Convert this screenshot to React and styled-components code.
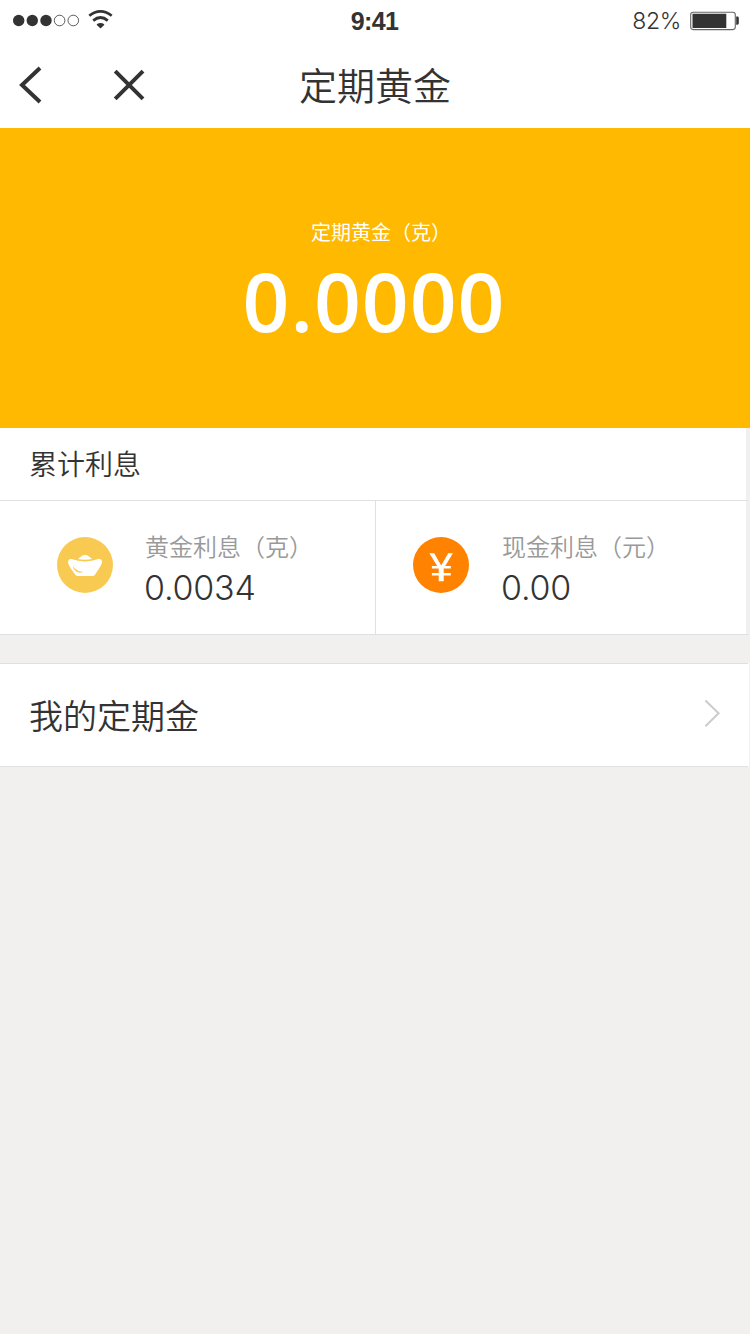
import React from "react";
import styled, { createGlobalStyle } from "styled-components";

const GlobalStyle = createGlobalStyle`
  * { box-sizing: border-box; }
  body { margin: 0; background: #f1f0ee; }
  svg { display: block; }
`;

const Page = styled.div`
  width: 750px;
  min-height: 1334px;
  background: #f1f0ee;
  color: #333;
  font-family: "Noto Sans CJK SC", sans-serif;
  font-weight: 350;
  white-space: nowrap;
`;

const StatusBar = styled.div`
  display: grid;
  grid-template-columns: 1fr auto 1fr;
  height: 40px;
  padding: 0 11px 0 12px;
  background: #fff;
`;

const Signal = styled.div`
  display: flex;
  height: 40px;
`;

const Clock = styled.div`
  padding-right: 2px;
  font-family: "Liberation Sans", Arial, sans-serif;
  font-size: 25px;
  font-weight: 700;
  line-height: 42px;
  letter-spacing: -0.6px;
`;

const Power = styled.div`
  display: flex;
  justify-content: flex-end;
  gap: 9px;
  font-family: Inter, sans-serif;
  font-size: 23px;
  font-weight: 300;
  line-height: 42px;
  letter-spacing: -0.3px;
`;

const NavBar = styled.header`
  display: grid;
  grid-template-columns: 250px 1fr 250px;
  height: 88px;
  background: #fff;
`;

const NavTitle = styled.h1`
  margin: 0;
  text-align: center;
  font-size: 38px;
  font-weight: 350;
  line-height: 88px;
`;

const Hero = styled.section`
  display: flex;
  flex-direction: column;
  align-items: center;
  height: 300px;
  padding-top: 88px;
  background: #ffb900;
  color: #fff;
`;

const HeroLabel = styled.div`
  height: 32px;
  padding-left: 12px;
  font-size: 20px;
  font-weight: 400;
  line-height: 31px;
`;

const HeroValue = styled.div`
  padding-right: 2px;
  font-family: "Open Sans", sans-serif;
  font-size: 82px;
  font-weight: 570;
  letter-spacing: 1px;
  line-height: 104px;
`;

const Panel = styled.section`
  width: ${(p) => p.$width}px;
  background: #fff;
`;

const Rule = styled.div`
  width: ${(p) => p.$width}px;
  height: 1px;
  background: #dfe0e1;
`;

const PanelTitle = styled.h2`
  height: 72px;
  margin: 0;
  padding-left: 29px;
  font-size: 28px;
  font-weight: 350;
  line-height: 70px;
`;

const Stats = styled.div`
  display: grid;
  grid-template-columns: 376px 1fr;
  height: 133px;
`;

const Stat = styled.div`
  display: grid;
  grid-template-columns: 56px 1fr;
  column-gap: ${(p) => p.$gap}px;
  padding: 36px 0 0 ${(p) => p.$inset}px;
  border-right: ${(p) => (p.$divided ? "1px solid #dfe0e1" : "none")};
`;

const StatLabel = styled.div`
  height: 36px;
  margin-top: -9px;
  color: #999;
  font-size: 24px;
  line-height: 35px;
`;

const StatValue = styled.div`
  margin-left: -1px;
  font-family: Inter, sans-serif;
  font-size: 34px;
  font-weight: 320;
  letter-spacing: -0.2px;
  line-height: 48px;
`;

const LinkRow = styled.div`
  display: flex;
  justify-content: space-between;
  height: 102px;
  padding: 0 28px 0 29px;
  font-size: 34px;
  line-height: 101px;
`;

const Gap = styled.div`
  height: 28px;
`;

function SignalIcon() {
  return (
    <svg width="103" height="40" viewBox="0 0 103 40" fill="#333">
      <circle cx="6.7" cy="20.5" r="5.7" />
      <circle cx="20.3" cy="20.5" r="5.7" />
      <circle cx="34" cy="20.5" r="5.7" />
      <circle cx="47.6" cy="20.5" r="5.3" fill="none" stroke="#333" strokeWidth=".8" />
      <circle cx="61.3" cy="20.5" r="5.3" fill="none" stroke="#333" strokeWidth=".8" />
      <g fill="none" stroke="#333" strokeWidth="2.7">
        <path d="M77.3 15.8C84.2 9.8 92.8 9.8 99.7 15.8" />
        <path d="M81.2 20.6C85.8 16.7 91.2 16.7 95.8 20.6" />
      </g>
      <path d="M84.8 24.3Q88.5 21.6 92.2 24.3V25L88.5 28.6L84.8 25Z" />
    </svg>
  );
}

function BatteryIcon() {
  return (
    <svg width="49" height="40" viewBox="0 0 49 40">
      <rect x=".7" y="12.2" width="44.6" height="17.4" rx="2.5" fill="#fff" stroke="#666" strokeWidth="1.1" />
      <path fill="#333" d="M2.5 13.8h33.8v14.3H2.5zM46.2 16.5h1.2q1.4 0 1.4 1.4v5.4q0 1.4-1.4 1.4h-1.2z" />
    </svg>
  );
}

function NavIcons() {
  return (
    <svg width="250" height="88" fill="none" stroke="#333" strokeWidth="4">
      <path d="M40 28L22 45L40 62" />
      <path d="M115.2 31.2L143 58.8M143 31.2L115.2 58.8" />
    </svg>
  );
}

function IngotIcon() {
  return (
    <svg width="56" height="56" viewBox="0 0 56 56">
      <circle cx="28" cy="28" r="28" fill="#f8ca52" />
      <path fill="#fff" d="M20.8 22C23.6 20.8 24.2 18 28 18S32.6 20.8 35.4 22Q28 23.5 20.8 22Z" />
      <path fill="#fff" d="M14.5 22.1Q28 27 41.3 22.1C44.4 21.8 45.8 23.8 44.7 26.8C42.8 31 40 35 37.6 38.2Q37 39 36 39H20.4Q19.4 39 18.8 38.2C16 34.8 13.1 31.2 11.4 26.8C10.4 24 12 21.8 14.5 22.1Z" />
      <path fill="#f8ca52" d="M16 29C19 33.3 21.6 34.7 25.9 34.6Q24.9 36 22.2 35.6C18.5 34.8 16.2 32 16 29Z" />
    </svg>
  );
}

function YuanIcon() {
  return (
    <svg width="56" height="56" viewBox="0 0 56 56">
      <circle cx="28" cy="28" r="28" fill="#ff8200" />
      <path fill="#fff" d="M16.4 16.3H21.2L28.2 28.6L35.2 16.3H39.9L32.2 29H37.8V31.5H30.7V36H37.8V38.5H30.7V44.3H25.7V38.5H18.9V36H25.7V31.5H18.9V29H24.2Z" />
    </svg>
  );
}

function Chevron() {
  return (
    <svg width="18" height="102" fill="none" stroke="#ccc" strokeWidth="2">
      <path d="M2.4 36.5L15.6 49.3L2.4 62.2" />
    </svg>
  );
}

function StatItem({ icon, label, value, inset, gap, divided }) {
  return (
    <Stat $inset={inset} $gap={gap} $divided={divided}>
      {icon}
      <div>
        <StatLabel>{label}</StatLabel>
        <StatValue>{value}</StatValue>
      </div>
    </Stat>
  );
}

export default function App() {
  return (
    <Page>
      <GlobalStyle />
      <StatusBar>
        <Signal><SignalIcon /></Signal>
        <Clock>9:41</Clock>
        <Power>82%<BatteryIcon /></Power>
      </StatusBar>
      <NavBar>
        <NavIcons />
        <NavTitle>定期黄金</NavTitle>
      </NavBar>
      <Hero>
        <HeroLabel>定期黄金（克）</HeroLabel>
        <HeroValue>0.0000</HeroValue>
      </Hero>
      <Panel $width={746}>
        <PanelTitle>累计利息</PanelTitle>
        <Rule $width={748} />
        <Stats>
          <StatItem icon={<IngotIcon />} label="黄金利息（克）" value="0.0034" inset={57} gap={32} divided />
          <StatItem icon={<YuanIcon />} label="现金利息（元）" value="0.00" inset={37} gap={33} />
        </Stats>
        <Rule $width={748} />
      </Panel>
      <Gap />
      <Panel $width={749}>
        <Rule $width={748} />
        <LinkRow>我的定期金<Chevron /></LinkRow>
        <Rule $width={748} />
      </Panel>
    </Page>
  );
}
